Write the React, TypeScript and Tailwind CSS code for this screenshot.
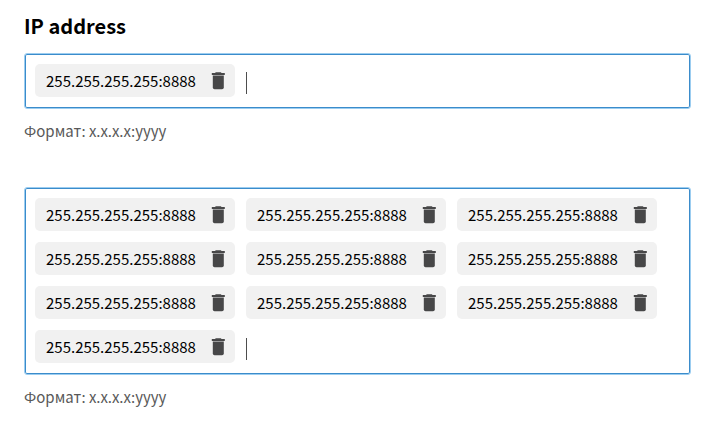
import { useState } from "react";

function TrashIcon() {
  return (
    <svg viewBox="0 0 14 18" className="h-[18px] w-[14px]" fill="#474748" aria-hidden="true">
      <path d="M4.8 0.3h5l0.8 0.8h3.2v1.8H0.8V1.1h3.2z" />
      <path d="M1.8 3.6h11v11.8a1.8 1.8 0 0 1-1.8 1.8H3.6a1.8 1.8 0 0 1-1.8-1.8z" />
    </svg>
  );
}

function Chip({ value, onRemove }: { value: string; onRemove: () => void }) {
  return (
    <li className="flex h-[33px] w-[200px] items-center justify-between rounded-[5px] bg-[#f1f1f1] pr-[10px] pl-[11px]">
      <span className="text-[15px] leading-[22px] text-black">{value}</span>
      <button type="button" aria-label="Удалить" onClick={onRemove} className="cursor-pointer">
        <TrashIcon />
      </button>
    </li>
  );
}

function AddressField({ id, count, label }: { id: string; count: number; label: string }) {
  const [items, setItems] = useState<string[]>(() => Array(count).fill("255.255.255.255:8888"));
  const [draft, setDraft] = useState("");

  return (
    <div>
      <ul className="flex flex-wrap gap-[11px] rounded-[3px] border border-[#9ccdf0] px-[10px] pt-[10px] pb-[11px] inset-ring inset-ring-[#3b8ccb]">
        {items.map((value, i) => (
          <Chip key={i} value={value} onRemove={() => setItems(items.filter((_, n) => n !== i))} />
        ))}
        <li className="flex min-w-[100px] flex-1 items-center">
          <span className="mt-[5px] h-[22px] w-px bg-[#4d4d4d]" />
          <input
            id={id}
            aria-label={label}
            aria-describedby={id + "-hint"}
            value={draft}
            onChange={(e) => setDraft(e.target.value)}
            className="w-full min-w-0 bg-transparent text-[15px] leading-[22px] outline-none"
          />
        </li>
      </ul>
      <p id={id + "-hint"} className="mt-[11px] text-[15px] leading-[22px] text-[#595959]">
        Формат: x.x.x.x:yyyy
      </p>
    </div>
  );
}

export default function App() {
  return (
    <main className="min-h-screen bg-white pt-[12px] pr-[29px] pl-[24px] font-['Noto_Sans_CJK_SC','Noto_Sans',sans-serif]">
      <h1 className="mb-[13px] text-[20px] leading-[28px] font-bold text-black">IP address</h1>
      <div className="flex flex-col gap-[45px]">
        <AddressField id="address" label="IP address" count={1} />
        <AddressField id="address-list" label="IP address" count={10} />
      </div>
    </main>
  );
}
